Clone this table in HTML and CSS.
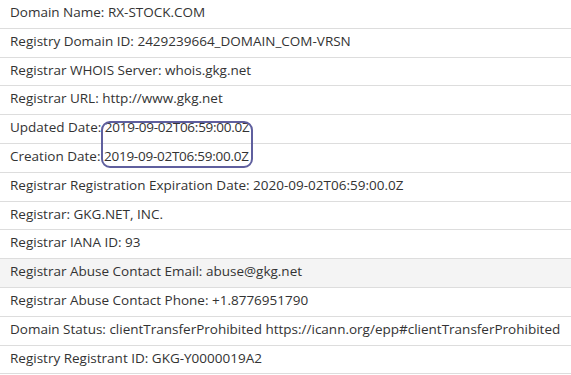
FILE: index.html
```html
<!DOCTYPE html>
<html lang="en">
<head>
  <meta charset="UTF-8" />
  <title>WHOIS</title>
  <link rel="stylesheet" href="styles.css">
</head>
<body>
  <div class="whois">
    <div class="row">Domain Name: RX-STOCK.COM</div>
    <div class="row">Registry Domain ID: 2429239664_DOMAIN_COM-VRSN</div>
    <div class="row">Registrar WHOIS Server: whois.gkg.net</div>
    <div class="row">Registrar URL: http://www.gkg.net</div>
    <div class="row">Updated Date: <span class="date">2019-09-02T06:59:00.0Z</span></div>
    <div class="row">Creation Date: <span class="date">2019-09-02T06:59:00.0Z</span></div>
    <div class="row">Registrar Registration Expiration Date: 2020-09-02T06:59:00.0Z</div>
    <div class="row">Registrar: GKG.NET, INC.</div>
    <div class="row">Registrar IANA ID: 93</div>
    <div class="row shaded">Registrar Abuse Contact Email: abuse@gkg.net</div>
    <div class="row">Registrar Abuse Contact Phone: +1.8776951790</div>
    <div class="row">Domain Status: clientTransferProhibited https://icann.org/epp#clientTransferProhibited</div>
    <div class="row">Registry Registrant ID: GKG-Y0000019A2</div>

    <!-- marker round the two dates -->
    <div class="mark"></div>
  </div>
</body>
</html>
```

FILE: styles.css
```css
body {
  margin: 0;
  background: #fff;
  font-family: 'Open Sans', sans-serif;
  color: #333;
  overflow: hidden;
}

.whois {
  position: relative;
}

.row {
  font-size: 13.5px;
  line-height: 17.8px;
  padding: 4px 10px 6px;
  border-bottom: 1px solid #ddd;
  white-space: nowrap;
}

.row.shaded {
  background: #f4f4f4;
}

.date {
  letter-spacing: -0.25px;
}

.mark {
  position: absolute;
  left: 101px;
  top: 121px;
  width: 148px;
  height: 43px;
  border: 2.5px solid #5f5f9e;
  border-radius: 9px;
}
```
